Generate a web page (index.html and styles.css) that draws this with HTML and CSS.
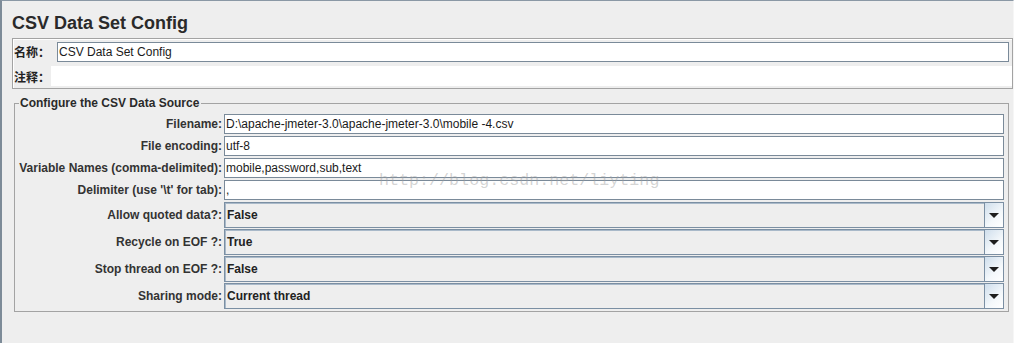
FILE: index.html
```html
<!DOCTYPE html>
<html lang="zh">
<head>
  <meta charset="UTF-8" />
  <title>CSV Data Set Config</title>
  <link rel="stylesheet" href="styles.css">
</head>
<body>

<h1 class="title">CSV Data Set Config</h1>

<div class="name-panel">
  <div class="name-row">
    <span class="cn-label">名称：</span>
    <div class="text-field name-field">CSV Data Set Config</div>
  </div>
  <div class="comment-row">
    <span class="cn-label">注释：</span>
    <div class="comment-area"></div>
  </div>
</div>

<fieldset class="source">
  <legend>Configure the CSV Data Source</legend>
  <div class="form-grid">
    <label>Filename:</label>
    <div class="text-field">D:\apache-jmeter-3.0\apache-jmeter-3.0\mobile -4.csv</div>

    <label>File encoding:</label>
    <div class="text-field">utf-8</div>

    <label>Variable Names (comma-delimited):</label>
    <div class="text-field">mobile,password,sub,text</div>

    <label>Delimiter (use '\t' for tab):</label>
    <div class="text-field">,</div>

    <label>Allow quoted data?:</label>
    <div class="combo"><span class="combo-value">False</span><span class="combo-btn"><i class="arrow"></i></span></div>

    <label>Recycle on EOF ?:</label>
    <div class="combo"><span class="combo-value">True</span><span class="combo-btn"><i class="arrow"></i></span></div>

    <label>Stop thread on EOF ?:</label>
    <div class="combo"><span class="combo-value">False</span><span class="combo-btn"><i class="arrow"></i></span></div>

    <label>Sharing mode:</label>
    <div class="combo"><span class="combo-value">Current thread</span><span class="combo-btn"><i class="arrow"></i></span></div>
  </div>
</fieldset>

<div class="watermark">http://blog.csdn.net/liyting</div>

</body>
</html>
```

FILE: styles.css
```css
html {
  height: 100%;
}

body {
  margin: 0;
  min-height: 100%;
  box-sizing: border-box;
  background-color: #eeeeee;
  border-top: 1px solid #8a98a5;
  border-left: 2px solid #7d8b98;
  border-right: 1px solid #f6f6f6;
  font-family: "Liberation Sans", Arial, sans-serif;
  font-size: 12px;
  color: #222;
  position: relative;
}

.title {
  margin: 0;
  padding: 11px 0 0 10px;
  height: 26px;
  font-size: 18px;
  line-height: 22px;
  font-weight: bold;
  color: #2a2a2a;
}

.name-panel {
  margin: 0 0 0 10px;
  height: 47px;
  border: 1px solid #a3a3a3;
  box-shadow: inset 1px 1px 0 #ffffff;
  padding: 2px 2px 0 1px;
}

.cn-label {
  font-family: "Noto Sans CJK SC", sans-serif;
  font-weight: bold;
  font-size: 12px;
  color: #222;
}

.name-row {
  display: flex;
  align-items: center;
  height: 21px;
}

.name-row .cn-label {
  width: 43px;
}

.name-field {
  flex: 1;
  height: 21px;
  margin-right: 1px;
}

.comment-row {
  display: flex;
  align-items: center;
  margin-top: 4px;
  height: 20px;
}

.comment-row .cn-label {
  width: 37px;
}

.comment-area {
  flex: 1;
  height: 20px;
  margin-right: -2px;
  background: #ffffff;
}

.text-field {
  box-sizing: border-box;
  height: 20px;
  border: 1px solid #7a8a99;
  background: #ffffff;
  padding: 0 1px;
  line-height: 18px;
  font-size: 12px;
  color: #1a1a1a;
  white-space: nowrap;
  overflow: hidden;
}

.source {
  margin: 7px 4px 0 12px;
  padding: 0 4px 2px 1px;
  border: 1px solid #a3a3a3;
  min-width: 0;
}

.source legend {
  margin-left: 3px;
  padding: 0 2px 0 1px;
  font-weight: bold;
  font-size: 12px;
  line-height: 15px;
  color: #2a2a2a;
}

.form-grid {
  margin-top: 3px;
  display: grid;
  grid-template-columns: 206px 1fr;
  grid-template-rows: repeat(4, 21px) repeat(4, 26px);
  column-gap: 2px;
  row-gap: 1px;
}

.form-grid label {
  height: 20px;
  display: flex;
  align-items: center;
  justify-content: flex-end;
  font-weight: bold;
  color: #333;
  white-space: nowrap;
}

.form-grid .combo + label,
.form-grid label:nth-of-type(5) {
  height: 26px;
}

.combo {
  box-sizing: border-box;
  height: 26px;
  display: flex;
  border: 1px solid #7b8fa3;
  box-shadow: inset 1px 1px 0 #a9b9c9;
  background: #eeeeee;
}

.combo-value {
  flex: 1;
  padding-left: 2px;
  display: flex;
  align-items: center;
  font-weight: bold;
  color: #222;
}

.combo-btn {
  width: 18px;
  border-left: 1px solid #7b8fa3;
  background: linear-gradient(135deg, #cfdeec 0%, #f4f8fb 60%, #ffffff 100%);
  display: flex;
  align-items: center;
  justify-content: center;
}

.arrow {
  width: 0;
  height: 0;
  border-left: 5px solid transparent;
  border-right: 5px solid transparent;
  border-top: 5px solid #1e1e1e;
}

.watermark {
  position: absolute;
  left: 377px;
  top: 171px;
  font-family: "Liberation Mono", monospace;
  font-size: 16.7px;
  line-height: 18px;
  color: rgba(160, 160, 160, 0.45);
  pointer-events: none;
}
```
